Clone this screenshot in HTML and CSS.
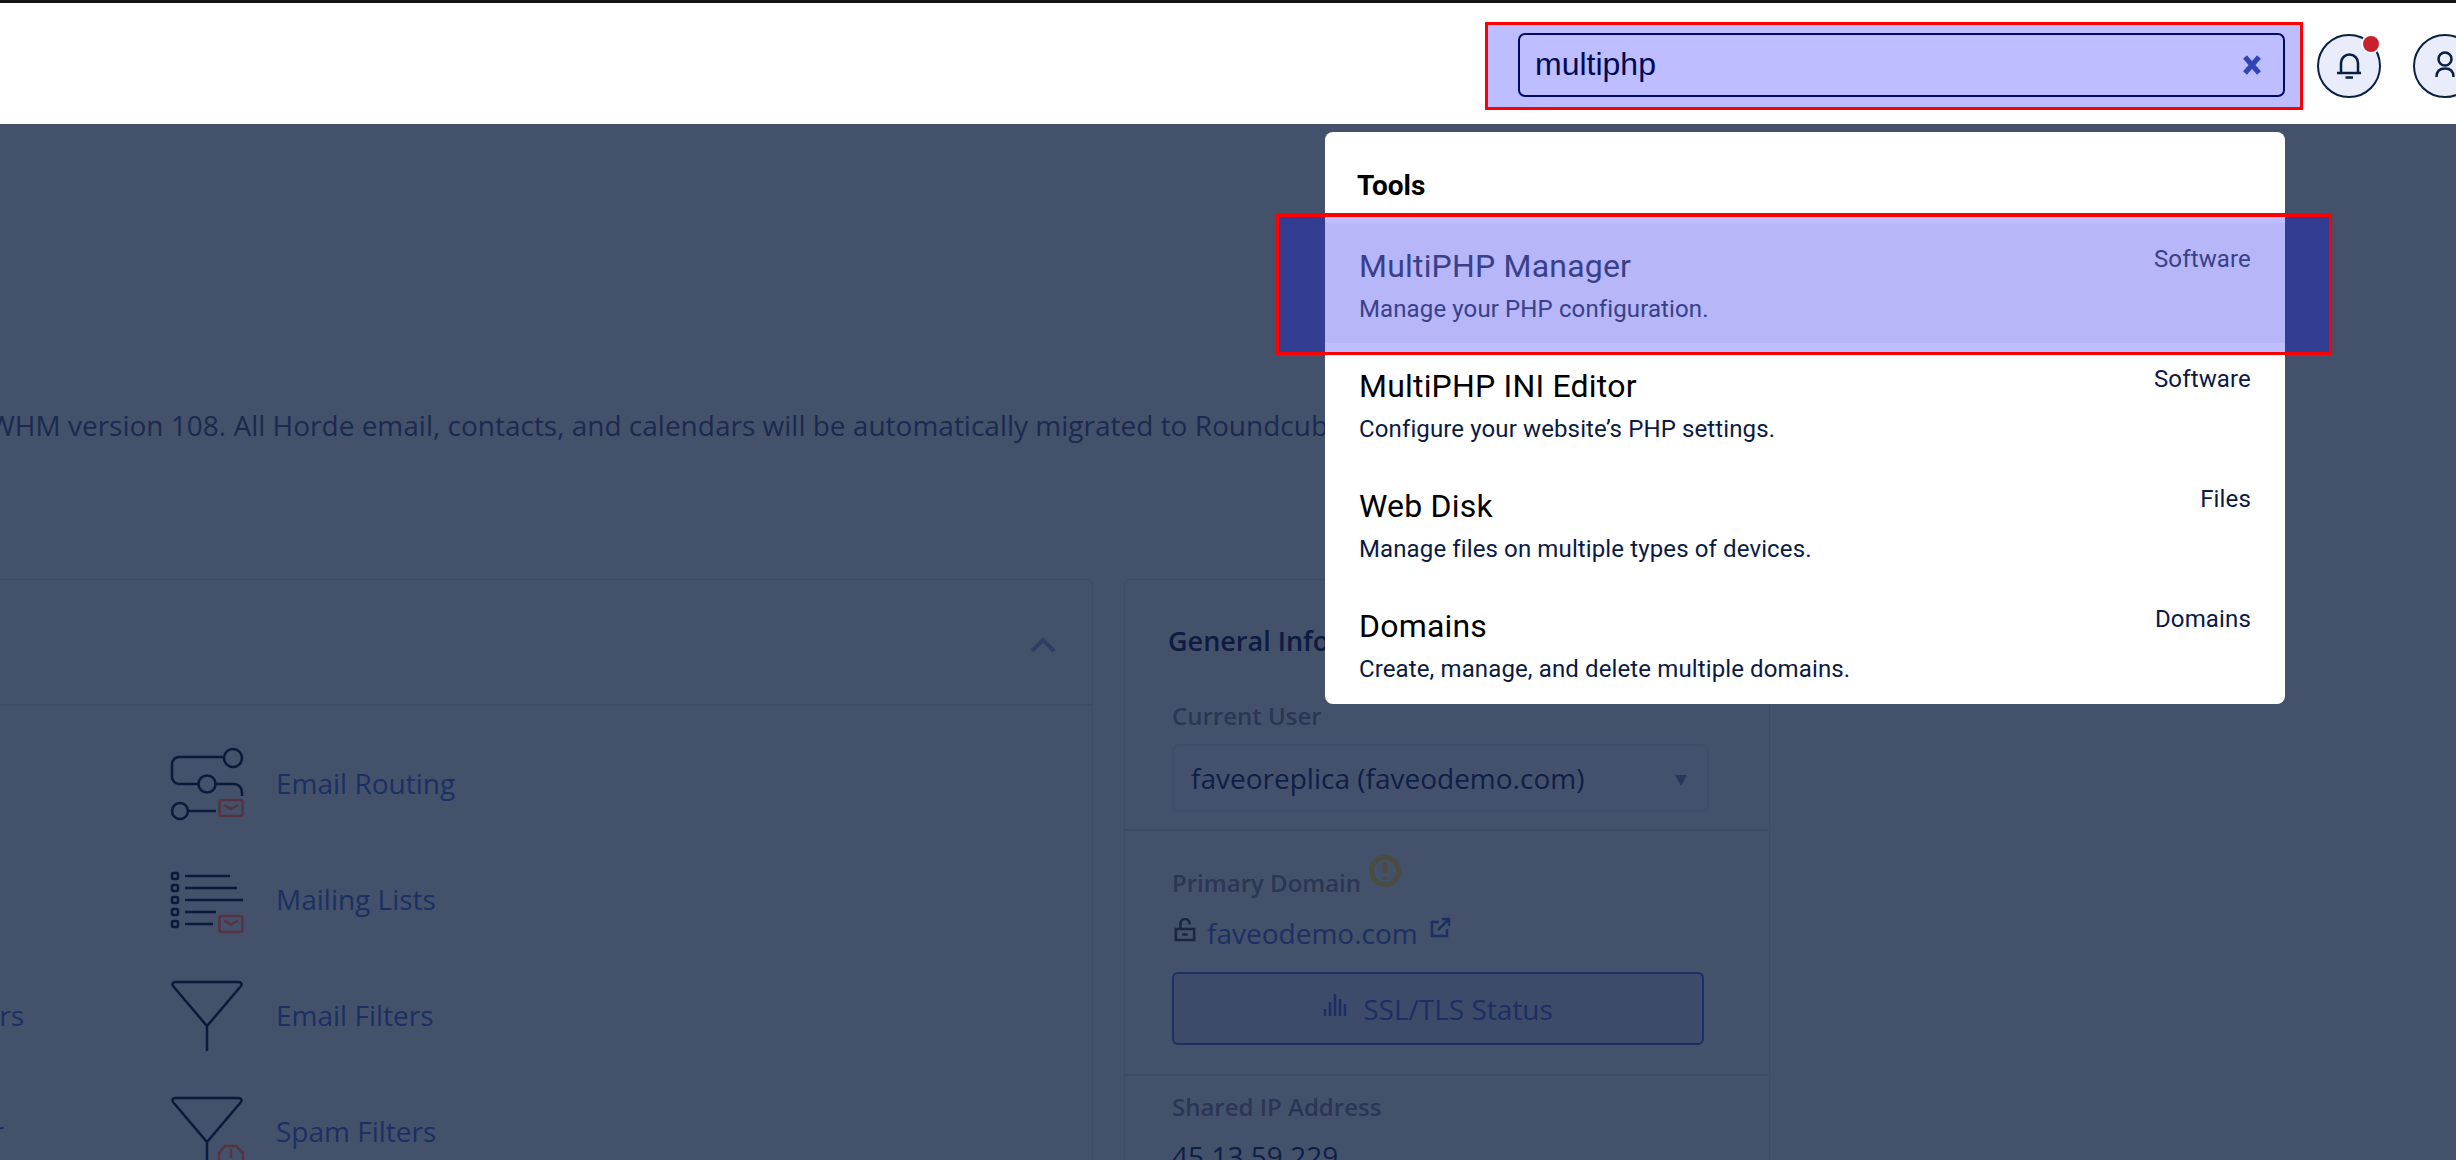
FILE: index.html
```html
<!DOCTYPE html>
<html lang="en">
<head>
<meta charset="utf-8">
<title>cPanel Tools</title>
<link rel="stylesheet" href="styles.css">
</head>
<body>
<header class="topbar">
  <div class="search-frame">
    <div class="search-input">
      <span class="search-text">multiphp</span>
      <svg class="clear-icon" viewBox="0 0 20 20"><path d="M3 2 L17 18 M17 2 L3 18"/></svg>
    </div>
  </div>
  <div class="round-btn">
    <svg viewBox="0 0 64 64" class="round-icon"><path d="M24 39 V29 a8.500 8.500 0 0 1 17 0 V39 M20 39 H44 M28.500 43.500 H36"/></svg>
    <span class="dot"></span>
  </div>
  <div class="round-btn">
    <svg viewBox="0 0 64 64" class="round-icon"><circle cx="32" cy="25" r="6.500"/><path d="M23.500 43 C23.500 37 27 34.500 32 34.500 S40.500 37 40.500 43"/></svg>
  </div>
</header>
<main class="page">
  <p class="notice">WHM version 108. All Horde email, contacts, and calendars will be automatically migrated to Roundcube.</p>
  <div class="columns">
    <section class="card tools-card">
      <div class="card-head">
        <svg class="chevron" viewBox="0 0 26 15"><path d="M2 14 L13 3 L24 14"/></svg>
      </div>
      <div class="tool-grid">
        <div class="tool-cell"></div>
        <a class="tool">
          <svg class="tool-icon" viewBox="0 0 72 72"><g class="ic-dark"><circle cx="62" cy="11" r="9"/><path d="M53 10 H8 a7 7 0 0 0 -7 7 V30 a7 7 0 0 0 7 7 H27"/><circle cx="36" cy="37" r="8.500"/><path d="M45 37 H63 a8 8 0 0 1 8 8 V49"/><circle cx="9" cy="64" r="8"/><path d="M17 64 H45"/></g><g class="ic-red"><rect x="48.500" y="53" width="23" height="16" rx="2"/><path d="M53 58 L60 62 L67 58"/></g></svg>
          <span>Email Routing</span>
        </a>
        <div class="tool-cell"></div>
        <a class="tool">
          <svg class="tool-icon" viewBox="0 0 72 72"><g class="ic-dark"><rect x="1" y="10" width="6" height="6" rx="1.500"/><rect x="1" y="22" width="6" height="6" rx="1.500"/><rect x="1" y="34" width="6" height="6" rx="1.500"/><rect x="1" y="46" width="6" height="6" rx="1.500"/><rect x="1" y="58" width="6" height="6" rx="1.500"/><path d="M14 13 H59 M14 25 H66 M14 37 H72 M14 49 H45 M14 61 H42"/></g><g class="ic-red"><rect x="48.500" y="53" width="23" height="16" rx="2"/><path d="M53 57.500 L60 61.500 L67 57.500"/></g></svg>
          <span>Mailing Lists</span>
        </a>
        <a class="tool tool-cut cut-a"><span>Global Email Filters</span></a>
        <a class="tool">
          <svg class="tool-icon" viewBox="0 0 72 72"><g class="ic-dark"><path d="M4 3 H68 a2.500 2.500 0 0 1 2 4 L36 47 L2 7 a2.500 2.500 0 0 1 2 -4 Z M36 47 V72"/></g></svg>
          <span>Email Filters</span>
        </a>
        <a class="tool tool-cut cut-b"><span>Address Importer</span></a>
        <a class="tool">
          <svg class="tool-icon" viewBox="0 0 72 72"><g class="ic-dark"><path d="M4 3 H68 a2.500 2.500 0 0 1 2 4 L36 47 L2 7 a2.500 2.500 0 0 1 2 -4 Z M36 47 V72"/></g><g class="ic-red"><path d="M54 51 L65 51 L72 58 V72 H48 V58 Z M60 54 V63"/></g></svg>
          <span>Spam Filters</span>
        </a>
      </div>
    </section>
    <aside class="card info-card">
      <h2 class="info-title">General Information</h2>
      <div class="info-block first">
        <div class="label">Current User</div>
        <div class="select"><span>faveoreplica (faveodemo.com)</span><span class="caret"></span></div>
      </div>
      <div class="info-block second">
        <div class="label label-row">Primary Domain
          <svg class="warn" viewBox="0 0 32 32"><circle cx="16" cy="16" r="13.500"/><path d="M16 7 V18 M16 22 V25"/></svg>
        </div>
        <div class="domain">
          <svg class="lock" viewBox="0 0 24 26"><path d="M2 12 H22 V24 H2 Z M7 12 V6 a5 5 0 0 1 10 0 V7 M9 18 H15"/></svg>
          <span>faveodemo.com</span>
          <svg class="ext" viewBox="0 0 22 22"><path d="M18 12 V19 H3 V5 H10 M9 13 L20 2 M13 2 H20 V9"/></svg>
        </div>
        <div class="ssl-btn">
          <svg class="bars" viewBox="0 0 24 22"><path d="M2 15 V22 M7 8 V22 M12 0 V22 M17 5 V22 M22 10 V22"/></svg>
          <span>SSL/TLS Status</span>
        </div>
      </div>
      <div class="info-block third">
        <div class="label">Shared IP Address</div>
        <div class="ip">45.13.59.229</div>
      </div>
    </aside>
  </div>
</main>
<div class="dropdown">
  <div class="dd-title">Tools</div>
  <div class="dd-row active">
    <div class="dd-main"><div class="dd-name">MultiPHP Manager</div><div class="dd-desc">Manage your PHP configuration.</div></div>
    <div class="dd-cat">Software</div>
  </div>
  <div class="dd-row">
    <div class="dd-main"><div class="dd-name">MultiPHP INI Editor</div><div class="dd-desc">Configure your website’s PHP settings.</div></div>
    <div class="dd-cat">Software</div>
  </div>
  <div class="dd-row">
    <div class="dd-main"><div class="dd-name">Web Disk</div><div class="dd-desc">Manage files on multiple types of devices.</div></div>
    <div class="dd-cat">Files</div>
  </div>
  <div class="dd-row">
    <div class="dd-main"><div class="dd-name">Domains</div><div class="dd-desc">Create, manage, and delete multiple domains.</div></div>
    <div class="dd-cat">Domains</div>
  </div>
</div>
<div class="highlight"></div>
</body>
</html>
```
FILE: styles.css
```css
* { box-sizing: border-box; }
html, body { margin: 0; height: 1160px; overflow: hidden; }
body {
  width: 2456px;
  position: relative;
  background: #44516b;
  font-family: "Open Sans", sans-serif;
  color: #0d1b3e;
}
.topbar {
  height: 124px;
  background: #fff;
  border-top: 3px solid #141414;
  display: flex;
  justify-content: flex-start;
  align-items: center;
  padding-left: 1485px;
}
.search-frame {
  flex: none;
  width: 818px;
  height: 88px;
  margin-top: 4px;
  border: 3px solid #ff0000;
  background: #bdbdff;
  padding: 8px 15px 0 30px;
}
.search-input {
  height: 64px;
  border: 2px solid #000a66;
  border-radius: 7px;
  display: flex;
  align-items: center;
  justify-content: space-between;
  padding: 0 21px 0 15px;
}
.search-text { font: 32px "Liberation Sans", sans-serif; color: #000a55; }
.clear-icon { width: 20px; height: 20px; fill: none; stroke: #2f45b5; stroke-width: 5; }
.round-btn {
  flex: none;
  width: 64px;
  height: 64px;
  margin-top: 4px;
  margin-left: 14px;
  margin-right: 18px;
  border: 2px solid #0a1f44;
  border-radius: 50%;
  background: #e9ecfb;
  position: relative;
}
.round-icon { position: absolute; left: -2px; top: -2px; width: 64px; height: 64px; fill: none; stroke: #0a1f44; stroke-width: 2.500; }
.dot {
  position: absolute;
  right: 0;
  top: 0;
  width: 16px;
  height: 16px;
  border-radius: 50%;
  background: #c8202f;
  box-shadow: 0 0 0 2px #fff;
}
.page { height: 1036px; overflow: hidden; }
.notice {
  margin: 0;
  padding-top: 286px;
  white-space: nowrap;
  margin-left: -11px;
  font-size: 28px;
  line-height: 30px;
  color: #1a2a4e;
}
.columns { display: flex; gap: 31px; margin-top: 139px; }
.card { border: 1px solid #3f4b66; border-radius: 6px; }
.tools-card { width: 1200px; margin-left: -107px; height: 620px; flex: none; }
.card-head { height: 126px; border-bottom: 2px solid #3f4b66; display: flex; align-items: center; justify-content: flex-end; padding-right: 36px; }
.chevron { width: 26px; height: 15px; margin-top: 4px; fill: none; stroke: #2f3e62; stroke-width: 4; }
.tool-grid { display: grid; grid-template-columns: 277px 1fr; grid-auto-rows: 116px; padding-top: 19px; }
.tool { display: flex; align-items: center; gap: 33px; font-size: 28px; color: #1c2f62; white-space: nowrap; min-width: 0; }
.tool-cut { justify-content: flex-end; }
.cut-a { padding-right: 147px; }
.cut-b { padding-right: 167px; }
.tool-icon { width: 72px; height: 72px; flex: none; fill: none; stroke-width: 2.500; overflow: visible; }
.ic-dark { stroke: #0b1a3a; }
.ic-red { stroke: #57323f; }
.info-card { width: 646px; flex: none; height: 700px; }
.info-title { margin: 0; padding: 43px 0 0 43px; font-size: 27px; font-weight: 600; line-height: 36px; color: #0d1b40; white-space: nowrap; }
.info-block { padding: 0 47px; border-bottom: 2px solid #3f4b66; }
.first { padding-top: 41px; height: 172px; }
.second { padding-top: 26px; height: 245px; }
.third { padding-top: 15px; border-bottom: 0; }
.label { font-size: 24px; font-weight: 600; color: #2a3654; line-height: 32px; }
.label-row { display: flex; align-items: flex-start; gap: 8px; padding-top: 10px; }
.select {
  margin-top: 12px;
  width: 537px;
  height: 68px;
  border: 2px solid #414e68;
  background: #44516d;
  border-radius: 8px;
  display: flex;
  align-items: center;
  justify-content: space-between;
  padding: 0 20px 0 17px;
  font-size: 28px;
  color: #0f1e46;
}
.caret {
  width: 0;
  height: 0;
  margin-top: 4px;
  border-left: 6px solid transparent;
  border-right: 6px solid transparent;
  border-top: 11px solid #27365a;
}
.warn { flex: none; width: 32px; height: 32px; margin-top: -12px; fill: none; stroke: #4a4c3f; stroke-width: 5; }
.domain { display: flex; align-items: center; gap: 11px; margin-top: 14px; font-size: 28px; color: #1c2f62; padding-left: 2px; height: 40px; }
.lock { width: 22px; height: 24px; margin-top: -6px; fill: none; stroke: #1c2540; stroke-width: 2.800; }
.ext { width: 22px; height: 22px; margin-top: -10px; fill: none; stroke: #1c2f62; stroke-width: 2.500; }
.ssl-btn {
  margin-top: 19px;
  width: 532px;
  height: 73px;
  border: 2px solid #1c2f62;
  border-radius: 6px;
  background: #3d4a69;
  display: flex;
  align-items: center;
  justify-content: center;
  gap: 16px;
  font-size: 28px;
  color: #1c2f62;
}
.bars { width: 24px; height: 22px; margin-top: -8px; fill: none; stroke: #1c2f62; stroke-width: 2.500; }
.ip { margin-top: 14px; font-size: 28px; color: #0f1e46; }
.dropdown {
  position: absolute;
  left: 1325px;
  top: 132px;
  width: 960px;
  height: 572px;
  background: #fff;
  border-radius: 8px;
  overflow: hidden;
  font-family: Roboto, sans-serif;
  color: #0a1a44;
}
.dd-title { height: 91px; padding: 37px 0 0 32px; font: 700 28px/34px Roboto, sans-serif; color: #000; }
.dd-row {
  height: 120px;
  padding: 21px 34px 0 34px;
  display: flex;
  justify-content: space-between;
}
.dd-row.active { background: #f6f6f6; }
.dd-name { font: 400 32px/40px Roboto, sans-serif; letter-spacing: 0.2px; margin-top: 2px; color: #000; }
.dd-desc { font: 400 24px/30px Roboto, sans-serif; letter-spacing: 0.12px; margin-top: 8px; }
.dd-cat { font: 400 24px/30px Roboto, sans-serif; letter-spacing: 0.15px; }
.active .dd-name, .active .dd-desc, .active .dd-cat { color: #4d555d; }
.highlight {
  position: absolute;
  left: 1276px;
  top: 213px;
  width: 1056px;
  height: 142px;
  border: 3px solid #ff0000;
  border-top-width: 4px;
  background: rgba(6, 6, 255, 0.267);
}
```
